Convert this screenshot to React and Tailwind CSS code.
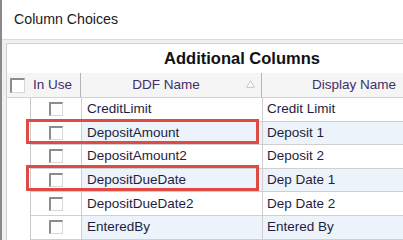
import React from 'react';

const rows = [
  { name: 'CreditLimit', display: 'Credit Limit' },
  { name: 'DepositAmount', display: 'Deposit 1' },
  { name: 'DepositAmount2', display: 'Deposit 2' },
  { name: 'DepositDueDate', display: 'Dep Date 1' },
  { name: 'DepositDueDate2', display: 'Dep Date 2' },
  { name: 'EnteredBy', display: 'Entered By' },
];

const Checkbox = ({ size = 'w-[14px] h-[14px]' }) => (
  <div className={`${size} bg-white border-t-2 border-l-2 border-t-[#8c8c8c] border-l-[#8c8c8c] border-b border-r border-b-[#d8d8d8] border-r-[#d8d8d8]`} />
);

const App = () => {
  return (
    <div className="w-[403px] h-[240px] overflow-hidden bg-white flex font-['Liberation_Sans',Arial,sans-serif]">
      <div className="w-[2px] shrink-0 bg-[#8a8a8a]" />
      <div className="flex-1 min-w-0 flex flex-col">
        <div className="h-[39px] shrink-0 pl-[12px] flex items-center text-[14.2px] text-[#1a1a1a]">
          Column Choices
        </div>
        <div className="flex-1 border-t border-[#d6dbe0] bg-[#f0f0f0] pt-[3px] pl-[4px]">
          <div className="relative w-[471px] border-t border-l border-[#d0d0d0] bg-white">
            <div className="h-[29px] flex items-center justify-center font-bold text-[16.5px] text-[#111]">
              Additional Columns
            </div>

            <div className="grid grid-cols-[74px_181px_1fr] h-[25px] bg-[#f5f5f5] border-b border-[#d4d4d4] text-[13.5px] text-[#3e2f6a]">
              <div className="flex items-center border-r border-[#b4b4b4] pl-[3px]">
                <Checkbox size="w-[15px] h-[15px]" />
                <span className="ml-[8px]">In Use</span>
              </div>
              <div className="relative flex items-center justify-center pr-[10px] border-r border-[#b4b4b4]">
                DDF Name
                <svg className="absolute right-[6px] top-[7px]" width="9" height="8" viewBox="0 0 9 8">
                  <path d="M4.5 0.8 L8.3 7.3 L0.7 7.3 Z" fill="#fff" stroke="#c4c4c4" strokeWidth="1" />
                </svg>
              </div>
              <div className="flex items-center pl-[50px]">Display Name</div>
            </div>

            {rows.map((row, i) => (
              <div
                key={row.name}
                className="grid grid-cols-[24px_51px_181px_1fr] h-[23.6px] text-[13.5px] text-[#1e1e3c]"
              >
                <div className="border-r border-[#c8c8c8]" />
                <div className="flex items-center justify-center border-r border-b border-[#cfcfcf]">
                  <Checkbox />
                </div>
                <div className={`flex items-center pl-[5px] border-r border-b border-[#cfcfcf] ${i % 2 === 1 ? 'bg-[#edf3fa]' : ''}`}>
                  {row.name}
                </div>
                <div className={`flex items-center pl-[4px] border-b border-[#cfcfcf] ${i % 2 === 1 ? 'bg-[#edf3fa]' : ''}`}>
                  {row.display}
                </div>
              </div>
            ))}

            <div className="absolute left-[19px] top-[75px] w-[233px] h-[25px] border-[3px] border-[#e04a44]" />
            <div className="absolute left-[19px] top-[121px] w-[233px] h-[26px] border-[3px] border-[#e04a44]" />
          </div>
        </div>
      </div>
    </div>
  );
};

export default App;
